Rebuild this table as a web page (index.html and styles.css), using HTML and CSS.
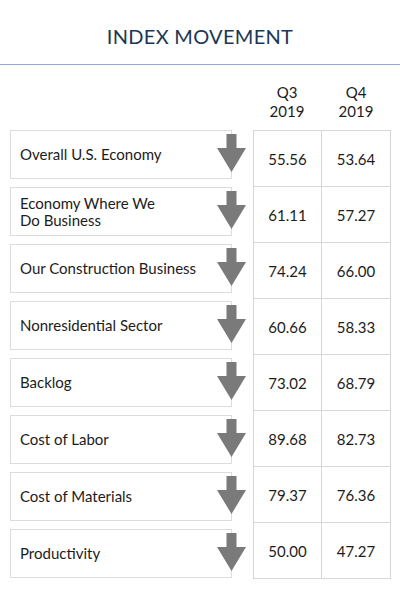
FILE: index.html
```html
<!DOCTYPE html>
<html lang="en">
<head>
    <meta charset="UTF-8">
    <meta name="viewport" content="width=device-width, initial-scale=1.0">
    <title>Index Movement</title>
    <link rel="stylesheet" href="styles.css">
</head>
<body>
    <div class="title-bar">
        <h1 class="title">INDEX MOVEMENT</h1>
    </div>

    <div class="head-row">
        <div class="head-cell">Q3<br>2019</div>
        <div class="head-cell">Q4<br>2019</div>
    </div>

    <div class="board">
        <div class="labels">
            <div class="label">Overall U.S. Economy<svg class="arrow" viewBox="0 0 29 38"><polygon points="9.5,0 19.5,0 19.5,14 29,14 14.5,38 0,14 9.5,14"/></svg></div>
            <div class="label">Economy Where We<br>Do Business<svg class="arrow" viewBox="0 0 29 38"><polygon points="9.5,0 19.5,0 19.5,14 29,14 14.5,38 0,14 9.5,14"/></svg></div>
            <div class="label">Our Construction Business<svg class="arrow" viewBox="0 0 29 38"><polygon points="9.5,0 19.5,0 19.5,14 29,14 14.5,38 0,14 9.5,14"/></svg></div>
            <div class="label">Nonresidential Sector<svg class="arrow" viewBox="0 0 29 38"><polygon points="9.5,0 19.5,0 19.5,14 29,14 14.5,38 0,14 9.5,14"/></svg></div>
            <div class="label">Backlog<svg class="arrow" viewBox="0 0 29 38"><polygon points="9.5,0 19.5,0 19.5,14 29,14 14.5,38 0,14 9.5,14"/></svg></div>
            <div class="label">Cost of Labor<svg class="arrow" viewBox="0 0 29 38"><polygon points="9.5,0 19.5,0 19.5,14 29,14 14.5,38 0,14 9.5,14"/></svg></div>
            <div class="label">Cost of Materials<svg class="arrow" viewBox="0 0 29 38"><polygon points="9.5,0 19.5,0 19.5,14 29,14 14.5,38 0,14 9.5,14"/></svg></div>
            <div class="label">Productivity<svg class="arrow" viewBox="0 0 29 38"><polygon points="9.5,0 19.5,0 19.5,14 29,14 14.5,38 0,14 9.5,14"/></svg></div>
        </div>

        <div class="values">
            <div class="cell">55.56</div><div class="cell">53.64</div>
            <div class="cell">61.11</div><div class="cell">57.27</div>
            <div class="cell">74.24</div><div class="cell">66.00</div>
            <div class="cell">60.66</div><div class="cell">58.33</div>
            <div class="cell">73.02</div><div class="cell">68.79</div>
            <div class="cell">89.68</div><div class="cell">82.73</div>
            <div class="cell">79.37</div><div class="cell">76.36</div>
            <div class="cell">50.00</div><div class="cell">47.27</div>
        </div>
    </div>
</body>
</html>
```

FILE: styles.css
```css
* {
    box-sizing: border-box;
}

body {
    margin: 0;
    background-color: #ffffff;
    color: #1c1c1c;
    font-family: Lato, 'Noto Sans', sans-serif;
}

.title-bar {
    height: 65px;
    padding-top: 22px;
    border-bottom: 1px solid #8eaedc;
    text-align: center;
}

.title {
    margin: 0;
    font-size: 20px;
    font-weight: normal;
    line-height: 28px;
    letter-spacing: 0.3px;
    color: #1b3755;
}

.head-row {
    display: flex;
    height: 65px;
    padding-left: 253px;
    padding-top: 18px;
}

.head-cell {
    font-size: 15px;
    line-height: 19px;
    text-align: center;
    width: 68px;
}

.head-cell + .head-cell {
    width: 70px;
}

.board {
    display: flex;
    align-items: flex-start;
    padding-left: 10px;
    gap: 21px;
}

.labels {
    width: 222px;
}

.label {
    position: relative;
    display: flex;
    align-items: center;
    height: 49px;
    margin-bottom: 8px;
    padding-left: 9px;
    border: 1px solid #dcdcdc;
    font-size: 15px;
    line-height: 17px;
}

.arrow {
    position: absolute;
    top: 3px;
    right: -15px;
    width: 29px;
    height: 38px;
    fill: #7a7a7a;
}

.values {
    display: grid;
    grid-template-columns: 67px 68px;
    grid-auto-rows: 55px;
    gap: 1px;
    width: 138px;
    border: 1px solid #d6d6d6;
    background-color: #d6d6d6;
}

.cell {
    display: flex;
    align-items: center;
    justify-content: center;
    background-color: #ffffff;
    font-size: 15px;
}
```
